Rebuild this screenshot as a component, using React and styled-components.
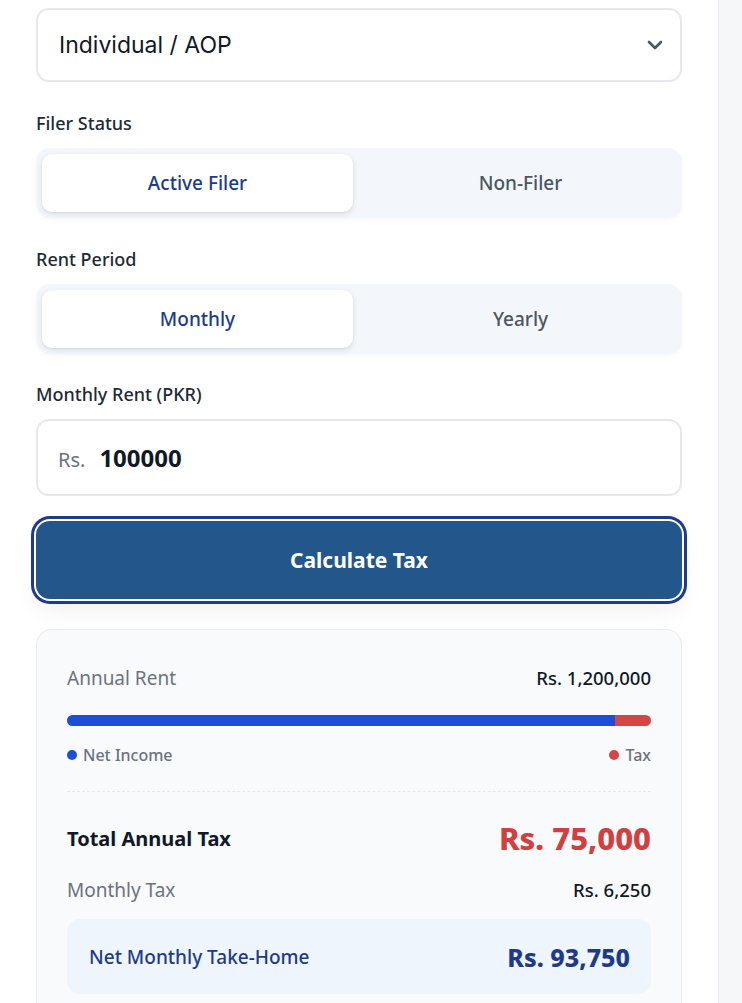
import React from "react";
import styled, { createGlobalStyle } from "styled-components";
import { ChevronDown } from "lucide-react";

const Global = createGlobalStyle`
  html, body { margin: 0; padding: 0; background: #ffffff; }
  body { font-family: "Noto Sans", "Open Sans", sans-serif; color: #111827; }
  * { box-sizing: border-box; }
`;

const Page = styled.div`
  display: flex;
  min-height: 1003px;
  width: 742px;
  overflow: hidden;
`;

const Main = styled.main`
  width: 718px;
  flex: none;
  padding: 8px 36px 0 36px;
  display: flex;
  flex-direction: column;
`;

const Side = styled.aside`
  flex: 1;
  background: #f6f7f9;
  border-left: 1px solid #eceef1;
`;

const Select = styled.div`
  height: 74px;
  border: 2px solid #e6e8eb;
  border-radius: 13px;
  background: #fff;
  display: flex;
  align-items: center;
  justify-content: space-between;
  padding: 0 13px 0 21px;
  font-family: "Inter", "Noto Sans", sans-serif;
  font-size: 23px;
  color: #111827;
  svg { color: #4b5563; }
`;

const Field = styled.div`
  display: flex;
  flex-direction: column;
  gap: 13px;
  margin-top: ${(p) => p.$top || 29}px;
`;

const Label = styled.div`
  font-size: 18px;
  line-height: 24px;
  font-weight: 500;
  color: #1f2937;
`;

const Toggle = styled.div`
  display: grid;
  grid-template-columns: 1fr 1fr;
  column-gap: 12px;
  padding: 6px;
  height: 70px;
  background: #f3f6fa;
  border-radius: 14px;
  box-shadow: 0 2px 6px rgba(15, 23, 42, 0.03);
`;

const Segment = styled.div`
  display: flex;
  align-items: center;
  justify-content: center;
  border-radius: 10px;
  font-size: 19px;
  font-weight: 500;
  color: ${(p) => (p.$active ? "#1e3a8a" : "#4b5563")};
  background: ${(p) => (p.$active ? "#ffffff" : "transparent")};
  box-shadow: ${(p) =>
    p.$active ? "0 2px 6px rgba(15, 23, 42, 0.10), 0 1px 2px rgba(15,23,42,0.06)" : "none"};
`;

const Input = styled.div`
  height: 77px;
  border: 2px solid #e6e8eb;
  border-radius: 13px;
  background: #fff;
  display: flex;
  align-items: center;
  gap: 14px;
  padding: 0 20px;
`;

const Prefix = styled.span`
  font-size: 20px;
  color: #6b7280;
  padding-top: 3px;
`;

const Value = styled.span`
  font-size: 24px;
  font-weight: 700;
  color: #111827;
`;

const Button = styled.button`
  margin-top: 25px;
  height: 78px;
  width: 100%;
  border: none;
  border-radius: 14px;
  background: #23568a;
  color: #fff;
  font-family: "Noto Sans", sans-serif;
  font-size: 21px;
  font-weight: 700;
  box-shadow: 0 0 0 2px #ffffff, 0 0 0 5px #1e3a8a, 0 12px 24px rgba(15, 23, 42, 0.06);
`;

const Card = styled.section`
  margin-top: 30px;
  background: #f8fafc;
  border: 1px solid #e8ebef;
  border-bottom: none;
  border-radius: 16px 16px 0 0;
  padding: 36px 30px 20px 30px;
  display: flex;
  flex-direction: column;
`;

const Row = styled.div`
  display: flex;
  justify-content: space-between;
  align-items: center;
  margin-top: ${(p) => p.$top || 0}px;
`;

const Muted = styled.span`
  font-size: 19px;
  line-height: 24px;
  color: #6b7280;
`;

const Amount = styled.span`
  font-size: 18.5px;
  line-height: 24px;
  font-weight: 500;
  color: #111827;
`;

const Bar = styled.div`
  margin-top: 25px;
  height: 11px;
  border-radius: 6px;
  overflow: hidden;
  display: flex;
  background: #e5e7eb;
`;

const BarPart = styled.div`
  height: 100%;
  background: ${(p) => p.$color};
`;

const Legend = styled.div`
  margin-top: 19px;
  display: flex;
  justify-content: space-between;
`;

const LegendItem = styled.span`
  display: flex;
  align-items: center;
  gap: 6px;
  font-size: 16px;
  line-height: 20px;
  font-weight: 500;
  color: #6b7280;
  &::before {
    content: "";
    width: 10px;
    height: 10px;
    border-radius: 50%;
    background: ${(p) => p.$color};
  }
`;

const Divider = styled.hr`
  margin: 26px 0 0 0;
  border: none;
  border-top: 1px dashed #e5e7eb;
`;

const TotalLabel = styled.span`
  font-size: 20px;
  font-weight: 700;
  color: #111827;
`;

const TotalValue = styled.span`
  font-size: 31px;
  line-height: 38px;
  font-weight: 800;
  color: #d23f3f;
`;

const TakeHome = styled.div`
  margin-top: 17px;
  height: 75px;
  border-radius: 13px;
  background: #eef5fd;
  display: flex;
  align-items: center;
  justify-content: space-between;
  padding: 0 21px 0 22px;
`;

const TakeLabel = styled.span`
  font-size: 19px;
  font-weight: 500;
  color: #1e3a8a;
`;

const TakeValue = styled.span`
  font-size: 25px;
  font-weight: 800;
  color: #1e3a8a;
`;

export default function App() {
  const net = 1125000;
  const tax = 75000;
  const total = net + tax;
  return (
    <>
      <Global />
      <Page>
        <Main>
          <Select>
            <span>Individual / AOP</span>
            <ChevronDown size={24} strokeWidth={2.6} />
          </Select>

          <Field>
            <Label>Filer Status</Label>
            <Toggle>
              <Segment $active>Active Filer</Segment>
              <Segment>Non-Filer</Segment>
            </Toggle>
          </Field>

          <Field>
            <Label>Rent Period</Label>
            <Toggle>
              <Segment $active>Monthly</Segment>
              <Segment>Yearly</Segment>
            </Toggle>
          </Field>

          <Field $top={28}>
            <Label>Monthly Rent (PKR)</Label>
            <Input>
              <Prefix>Rs.</Prefix>
              <Value>100000</Value>
            </Input>
          </Field>

          <Button>Calculate Tax</Button>

          <Card>
            <Row>
              <Muted>Annual Rent</Muted>
              <Amount>Rs. 1,200,000</Amount>
            </Row>
            <Bar>
              <BarPart $color="#1d4ed8" style={{ width: `${(net / total) * 100}%` }} />
              <BarPart $color="#d64545" style={{ width: `${(tax / total) * 100}%` }} />
            </Bar>
            <Legend>
              <LegendItem $color="#1d4ed8">Net Income</LegendItem>
              <LegendItem $color="#d64545">Tax</LegendItem>
            </Legend>
            <Divider />
            <Row $top={27}>
              <TotalLabel>Total Annual Tax</TotalLabel>
              <TotalValue>Rs. 75,000</TotalValue>
            </Row>
            <Row $top={21}>
              <Muted>Monthly Tax</Muted>
              <Amount>Rs. 6,250</Amount>
            </Row>
            <TakeHome>
              <TakeLabel>Net Monthly Take-Home</TakeLabel>
              <TakeValue>Rs. 93,750</TakeValue>
            </TakeHome>
          </Card>
        </Main>
        <Side />
      </Page>
    </>
  );
}
